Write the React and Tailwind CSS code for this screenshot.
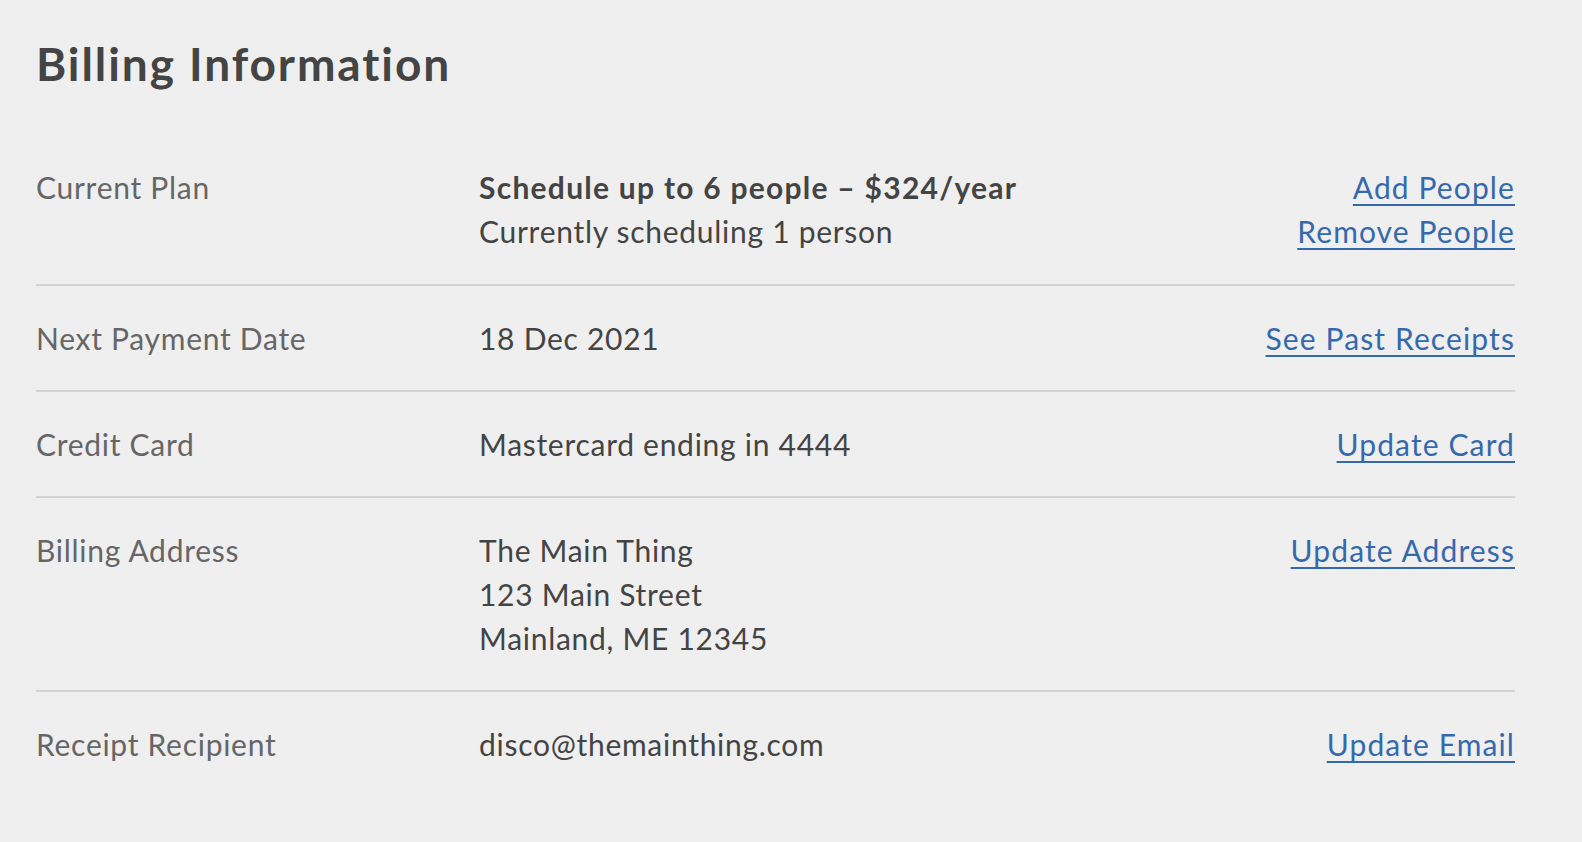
import React from 'react'

// billing rows: label, value lines, action links
const rows = [
  {
    label: 'Current Plan',
    lines: [
      { text: 'Schedule up to 6 people – $324/year', bold: true },
      { text: 'Currently scheduling 1 person' },
    ],
    links: ['Add People', 'Remove People'],
  },
  { label: 'Next Payment Date', lines: [{ text: '18 Dec 2021' }], links: ['See Past Receipts'] },
  { label: 'Credit Card', lines: [{ text: 'Mastercard ending in 4444' }], links: ['Update Card'] },
  {
    label: 'Billing Address',
    lines: [{ text: 'The Main Thing' }, { text: '123 Main Street' }, { text: 'Mainland, ME 12345' }],
    links: ['Update Address'],
  },
  { label: 'Receipt Recipient', lines: [{ text: 'disco@themainthing.com' }], links: ['Update Email'] },
]

export default function App() {
  return (
    <div
      className="min-h-screen bg-[#efefef] pl-[36px] pr-[67px] pt-[36px]"
      style={{ fontFamily: 'Lato, "Open Sans", sans-serif' }}
    >
      <h1 className="text-[46px] leading-[56px] font-bold tracking-[0.042em] text-[#444444] mb-[43px]">
        Billing Information
      </h1>

      <div>
        {rows.map((row, i) => (
          <div
            key={row.label}
            className={
              'flex items-start py-[30px] text-[30px] leading-[44px] tracking-[0.024em] ' +
              (i > 0 ? 'border-t-2 border-[#d2d2d2]' : 'pb-[31px]')
            }
          >
            <div className="w-[443px] shrink-0 text-[#666666]">{row.label}</div>
            <div className="flex-1 text-[#444444]">
              {row.lines.map((l) => (
                <div key={l.text} className={l.bold ? 'font-bold tracking-[0.042em]' : ''}>
                  {l.text}
                </div>
              ))}
            </div>
            <div className="flex flex-col items-end">
              {row.links.map((link) => (
                <a
                  key={link}
                  href="#"
                  className="text-[#3569ad] tracking-[0.037em] underline decoration-2 underline-offset-[5px]"
                >
                  {link}
                </a>
              ))}
            </div>
          </div>
        ))}
      </div>
    </div>
  )
}
